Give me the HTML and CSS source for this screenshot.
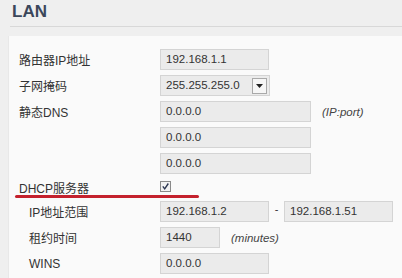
FILE: index.html
```html
<!DOCTYPE html>
<html lang="zh-CN">
<head>
    <meta charset="UTF-8">
    <meta name="viewport" content="width=device-width, initial-scale=1.0">
    <title>LAN</title>
    <link rel="stylesheet" href="styles.css">
</head>
<body>
    <div class="header">
        <h1 class="title">LAN</h1>
    </div>
    <div class="panel">
        <div class="row">
            <span class="label">路由器IP地址</span>
            <span class="field w-mid">192.168.1.1</span>
        </div>
        <div class="row">
            <span class="label">子网掩码</span>
            <span class="field select">
                255.255.255.0
                <span class="arrow"><svg width="7" height="4" viewBox="0 0 7 4"><path d="M0 0h7L3.5 4z" fill="#222"/></svg></span>
            </span>
        </div>
        <div class="row">
            <span class="label">静态DNS</span>
            <span class="field w-long">0.0.0.0</span>
            <span class="hint">(IP:port)</span>
        </div>
        <div class="row">
            <span class="label"></span>
            <span class="field w-long">0.0.0.0</span>
        </div>
        <div class="row">
            <span class="label"></span>
            <span class="field w-long">0.0.0.0</span>
        </div>
        <div class="row row-check">
            <span class="label">DHCP服务器</span>
            <span class="checkbox">
                <svg width="11" height="11" viewBox="0 0 11 11">
                    <rect x="0.5" y="0.5" width="10" height="10" fill="#f2f2f2" stroke="#8a8a8a"/>
                    <path d="M2.8 5.3l1.9 2.5 3.6-5.3" fill="none" stroke="#2b3550" stroke-width="1.4"/>
                </svg>
            </span>
        </div>
        <div class="mark"></div>
        <div class="row">
            <span class="label sub">IP地址范围</span>
            <span class="field w-mid">192.168.1.2</span>
            <span class="dash">-</span>
            <span class="field w-mid">192.168.1.51</span>
        </div>
        <div class="row">
            <span class="label sub">租约时间</span>
            <span class="field w-short">1440</span>
            <span class="hint">(minutes)</span>
        </div>
        <div class="row">
            <span class="label sub">WINS</span>
            <span class="field w-mid">0.0.0.0</span>
        </div>
    </div>
</body>
</html>
```

FILE: styles.css
```css
body {
    margin: 0;
    background-color: #efefef;
    font-family: 'Liberation Sans', 'Noto Sans CJK SC', sans-serif;
    color: #333;
    height: 100vh;
    overflow: hidden;
}

.header {
    margin-left: 10px;
    height: 24px;
    padding-top: 2px;
    border-bottom: 1px solid #d8d8d8;
}

.title {
    margin: 0;
    padding-left: 2px;
    font-size: 17px;
    line-height: 20px;
    font-weight: bold;
    color: #3b475b;
}

.panel {
    box-sizing: border-box;
    height: calc(100vh - 36px);
    margin: 9px 0 0 8px;
    padding: 13px 0 0 10px;
    background-color: #fafafa;
    border-left: 1px solid #e8e8e8;
}

.row {
    display: flex;
    align-items: center;
    height: 21px;
    margin-bottom: 5px;
}

.row-check {
    height: 16px;
    margin-bottom: 0;
}

.row:last-child {
    margin-bottom: 0;
}

.label {
    width: 141px;
    flex-shrink: 0;
    font-size: 12px;
    white-space: nowrap;
}

.label.sub {
    width: 131px;
    padding-left: 10px;
}

.field {
    box-sizing: border-box;
    height: 21px;
    padding: 0 5px;
    border: 1px solid #d4d4d4;
    background-color: #ebebeb;
    font-size: 11.5px;
    line-height: 19px;
    color: #333;
}

.w-mid {
    width: 109px;
}

.w-long {
    width: 151px;
}

.w-short {
    width: 60px;
}

.select {
    display: flex;
    align-items: center;
    justify-content: space-between;
    width: 110px;
    padding-right: 2px;
}

.arrow {
    box-sizing: border-box;
    width: 15px;
    height: 16px;
    border: 1px solid #a9a9a9;
    background-color: #f6f6f6;
    display: flex;
    align-items: center;
    justify-content: center;
}

.hint {
    margin-left: 11px;
    font-size: 11.5px;
    font-style: italic;
    color: #444;
}

.dash {
    width: 15px;
    text-align: center;
    font-size: 11px;
    margin-top: -6px;
}

.checkbox {
    display: flex;
    margin-top: -2px;
}

.mark {
    width: 184px;
    height: 3px;
    margin: 0 0 3px -4px;
    background-color: #c4212d;
    border-radius: 2px;
}
```
